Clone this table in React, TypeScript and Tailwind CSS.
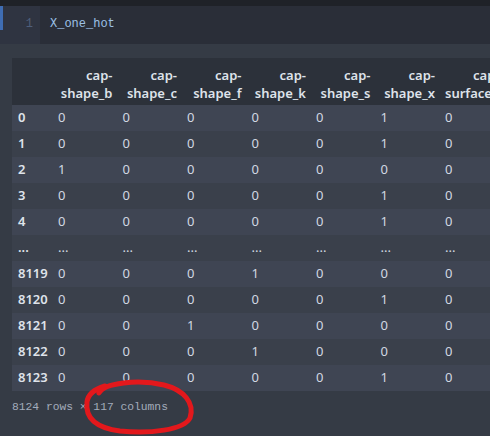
const cols = [
  ["cap-", "shape_b"],
  ["cap-", "shape_c"],
  ["cap-", "shape_f"],
  ["cap-", "shape_k"],
  ["cap-", "shape_s"],
  ["cap-", "shape_x"],
  ["cap-", "surface_f"],
  ["cap-", "surface_g"],
];

const rows: [string, string[]][] = [
  ["0", ["0", "0", "0", "0", "0", "1", "0", "0"]],
  ["1", ["0", "0", "0", "0", "0", "1", "0", "0"]],
  ["2", ["1", "0", "0", "0", "0", "0", "0", "0"]],
  ["3", ["0", "0", "0", "0", "0", "1", "0", "0"]],
  ["4", ["0", "0", "0", "0", "0", "1", "0", "0"]],
  ["...", ["...", "...", "...", "...", "...", "...", "...", "..."]],
  ["8119", ["0", "0", "0", "1", "0", "0", "0", "0"]],
  ["8120", ["0", "0", "0", "0", "0", "1", "0", "0"]],
  ["8121", ["0", "0", "1", "0", "0", "0", "0", "0"]],
  ["8122", ["0", "0", "0", "1", "0", "0", "0", "0"]],
  ["8123", ["0", "0", "0", "0", "0", "1", "0", "0"]],
];

export default function App() {
  return (
    <div className="relative w-[490px] h-[436px] overflow-hidden bg-[#353b45] flex flex-col">
      {/* top strip */}
      <div className="h-[6px] bg-[#1f2228] shrink-0" />

      {/* code cell */}
      <div className="h-[38px] flex shrink-0">
        <div className="w-[3px] flex flex-col bg-[#2f3441]">
          <div className="h-[24px] bg-[#3f6db3]" />
        </div>
        <div className="w-[37px] bg-[#2f3441] flex justify-end pr-[7px] pt-[9px] font-['Liberation_Mono',monospace] text-[12px] text-[#4f5f7c]">
          1
        </div>
        <div className="flex-1 bg-[#2a2e38] pl-[10px] pt-[9px] font-['Liberation_Mono',monospace] text-[12px] text-[#9dc1e6]">
          X_one_hot
        </div>
      </div>

      {/* output */}
      <div className="ml-[12px] mt-[14px] overflow-hidden shrink-0">
        <table className="border-collapse table-fixed w-[557px] font-['Noto_Sans',sans-serif] text-[13px] text-[#d2d8e2]">
          <colgroup>
            <col className="w-[41px]" />
            {cols.map((_, i) => (
              <col key={i} className="w-[64.5px]" />
            ))}
          </colgroup>
          <thead>
            <tr className="bg-[#2c313a] h-[47px]">
              <th />
              {cols.map(([a, b], i) => (
                <th
                  key={i}
                  className="text-right align-bottom px-[5px] pb-[3px] font-semibold leading-[18px] whitespace-nowrap text-[#dfe3ea]"
                >
                  {a}
                  <br />
                  {b}
                </th>
              ))}
            </tr>
          </thead>
          <tbody>
            {rows.map(([idx, vals], r) => (
              <tr
                key={idx}
                className={`h-[26px] ${r % 2 === 0 ? "bg-[#3f4553]" : "bg-[#3a404b]"}`}
              >
                <td className="pl-[6px] font-semibold text-[#dfe3ea]">{idx}</td>
                {vals.map((v, i) => (
                  <td key={i} className="pl-[5px]">
                    {v}
                  </td>
                ))}
              </tr>
            ))}
          </tbody>
        </table>
      </div>

      <div className="ml-[12px] mt-[8px] font-['Liberation_Mono',monospace] text-[11.3px] text-[#a3acbb]">
        8124 rows × 117 columns
      </div>

      {/* red ink circle */}
      <svg
        className="absolute left-0 top-0 pointer-events-none"
        width="490"
        height="436"
        viewBox="0 0 490 436"
      >
        <path
          d="M99 393 C104 383, 138 379, 164 385 C184 390, 195 403, 190 418 C184 430, 150 434, 120 431 C96 428, 85 418, 87 402 C88 394, 95 389, 105 386"
          fill="none"
          stroke="#e3181c"
          strokeWidth="5"
          strokeLinecap="round"
          strokeLinejoin="round"
        />
      </svg>
    </div>
  );
}
